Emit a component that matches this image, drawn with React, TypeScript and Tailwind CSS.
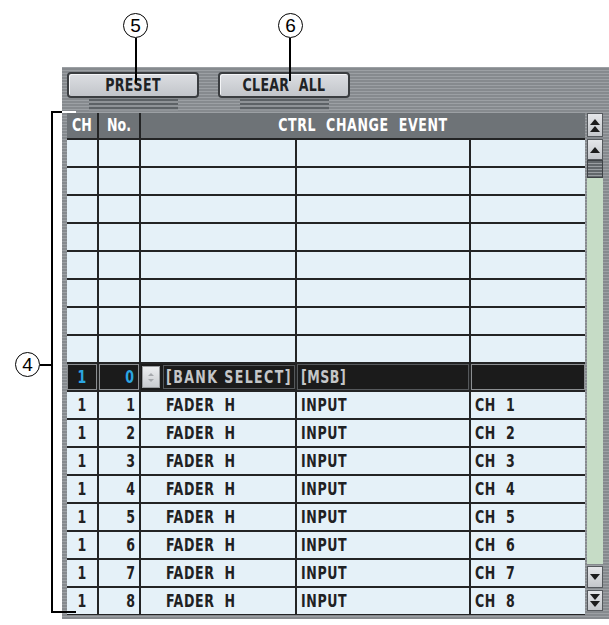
import React from 'react';

const lcd = { fontFamily: '"DejaVu Sans Condensed", "DejaVu Sans", sans-serif' };

const stripes =
  'bg-[repeating-linear-gradient(to_bottom,#9ca0a4_0px,#9ca0a4_1px,#868a8e_1px,#868a8e_3px)]';

const rows = [1, 2, 3, 4, 5, 6, 7, 8];

// tall, narrow LCD-style lettering
function T({ children }: { children: React.ReactNode }) {
  return <span className="inline-block scale-y-[1.3] whitespace-pre">{children}</span>;
}

function Circled({ n }: { n: string }) {
  return (
    <div
      className="w-[25px] h-[25px] rounded-full border border-black bg-white flex items-center justify-center text-[19px] leading-none text-black"
      style={{ fontFamily: '"Liberation Sans", Arial, sans-serif' }}
    >
      {n}
    </div>
  );
}

function PanelButton({ label }: { label: string }) {
  return (
    <div className="flex flex-col items-center">
      <div
        className="w-[132px] h-[26px] rounded-[4px] border-2 border-[#3a3d40] bg-[linear-gradient(to_bottom,#dcdee2,#c2c5ca)] shadow-[inset_1px_1px_0_#f4f5f7] flex items-center justify-center text-[14px] font-bold text-[#202225] tracking-[0.3px]"
        style={lcd}
      >
        <T>{label}</T>
      </div>
      <div className="w-[89px] h-[12px] mt-[1px] bg-[repeating-linear-gradient(to_bottom,#5d6266_0px,#5d6266_2px,#8f9397_2px,#8f9397_4px)]" />
    </div>
  );
}

function Tri({ up }: { up: boolean }) {
  return (
    <svg width="10" height="6" viewBox="0 0 10 6">
      <polygon points={up ? '5,0 10,6 0,6' : '0,0 10,0 5,6'} fill="#1c1c1c" />
    </svg>
  );
}

function ScrollBtn({ double, up, h }: { double?: boolean; up: boolean; h: string }) {
  return (
    <div className={`${h} w-[16px] border border-[#55595d] bg-[linear-gradient(to_bottom,#e4e6e9,#c4c7cb)] flex flex-col items-center justify-center gap-[1px]`}>
      <Tri up={up} />
      {double && <Tri up={up} />}
    </div>
  );
}

export default function App() {
  return (
    <div className="relative w-[609px] h-[625px] bg-white overflow-hidden">
      <div className="pl-[62px] pt-[67px]">
        <div className={`w-[547px] h-[552px] ${stripes}`}>
          {/* button bar */}
          <div className="flex pl-[5px] pt-[5px] h-[46px] gap-[19px]">
            <PanelButton label="PRESET" />
            <PanelButton label="CLEAR  ALL" />
          </div>

          <div className="flex pl-[5px] gap-[2px]">
            {/* table */}
            <div className="w-[518px] bg-[#232425] flex flex-col gap-[2px] pb-[1px]" style={lcd}>
              <div className="flex gap-[2px] h-[25px] text-white font-bold text-[14px]">
                <div className="w-[30px] bg-[#6e7377] flex items-center justify-center"><T>CH</T></div>
                <div className="w-[40px] bg-[#6e7377] flex items-center justify-center"><T>No.</T></div>
                <div className="flex-1 bg-[#6e7377] flex items-center justify-center tracking-[0.6px]">
                  <T>{'CTRL  CHANGE  EVENT'}</T>
                </div>
              </div>

              {Array.from({ length: 8 }).map((_, i) => (
                <div key={'e' + i} className="flex gap-[2px] h-[26px]">
                  <div className="w-[30px] bg-[#e5f1f8]" />
                  <div className="w-[40px] bg-[#e5f1f8]" />
                  <div className="w-[154px] bg-[#e5f1f8]" />
                  <div className="w-[172px] bg-[#e5f1f8]" />
                  <div className="w-[114px] bg-[#e5f1f8]" />
                </div>
              ))}

              {/* selected row */}
              <div className="flex gap-[2px] h-[26px] text-[14px] font-bold">
                <div className="w-[30px] bg-[#1b1b1b] border border-[#8c8f92] flex items-center justify-center text-[#2ba6e2]"><T>1</T></div>
                <div className="w-[40px] bg-[#1b1b1b] border border-[#8c8f92] flex items-center justify-end pr-[4px] text-[#2ba6e2]"><T>0</T></div>
                <div className="w-[154px] bg-[#1b1b1b] flex items-center gap-[3px] pl-[1px]">
                  <div className="w-[18px] h-[22px] bg-[linear-gradient(to_bottom,#eceef0,#c9ccd0)] border border-[#9a9da0] flex flex-col items-center justify-center">
                    <svg width="6" height="9" viewBox="0 0 6 9">
                      <polygon points="3,0 6,3 0,3" fill="#a6a9ad" />
                      <polygon points="0,6 6,6 3,9" fill="#a6a9ad" />
                    </svg>
                  </div>
                  <div className="flex-1 h-[24px] border border-[#55585b] flex items-center pl-[2px] text-[#c4c6c8] tracking-[1.4px]">
                    <T>[BANK SELECT]</T>
                  </div>
                </div>
                <div className="w-[172px] bg-[#1b1b1b] border border-[#55585b] flex items-center pl-[3px] text-[#c4c6c8] tracking-[0.5px]">
                  <T>[MSB]</T>
                </div>
                <div className="w-[114px] bg-[#1b1b1b] border border-[#8c8f92]" />
              </div>

              {rows.map((n) => (
                <div key={n} className="flex gap-[2px] h-[26px] text-[14px] font-bold text-[#1f2123]">
                  <div className="w-[30px] bg-[#e5f1f8] flex items-center justify-center"><T>1</T></div>
                  <div className="w-[40px] bg-[#e5f1f8] flex items-center justify-end pr-[4px]"><T>{n}</T></div>
                  <div className="w-[154px] bg-[#e5f1f8] flex items-center pl-[25px] tracking-[0.6px]"><T>{'FADER  H'}</T></div>
                  <div className="w-[172px] bg-[#e5f1f8] flex items-center pl-[4px] tracking-[0.6px]"><T>INPUT</T></div>
                  <div className="w-[114px] bg-[#e5f1f8] flex items-center pl-[4px] tracking-[0.6px]"><T>{'CH  ' + n}</T></div>
                </div>
              ))}
            </div>

            {/* scrollbar */}
            <div className="flex flex-col gap-[2px] w-[16px]">
              <ScrollBtn double up h="h-[24px]" />
              <ScrollBtn up h="h-[21px]" />
              <div className="h-[18px] -mt-[2px] border border-[#3e4246] bg-[repeating-linear-gradient(to_bottom,#62676b_0px,#62676b_2px,#9a9ea2_2px,#9a9ea2_3px)]" />
              <div className="h-[386px] -mt-[2px] bg-[#c6dcc6]" />
              <ScrollBtn up={false} h="h-[22px]" />
              <ScrollBtn double up={false} h="h-[21px]" />
            </div>
          </div>
        </div>
      </div>

      {/* callouts */}
      <div className="absolute left-[123px] top-[13px]">
        <Circled n="5" />
      </div>
      <div className="absolute left-[135px] top-[38px] w-[2px] h-[45px] bg-black" />
      <div className="absolute left-[278px] top-[13px]">
        <Circled n="6" />
      </div>
      <div className="absolute left-[289px] top-[38px] w-[2px] h-[43px] bg-black" />

      <div className="absolute left-[15px] top-[352px]">
        <Circled n="4" />
      </div>
      <div className="absolute left-[40px] top-[364px] w-[12px] h-[2px] bg-black" />
      <div className="absolute left-[51px] top-[111px] w-[2px] h-[502px] bg-black" />
      <div className="absolute left-[51px] top-[111px] w-[11px] h-[2px] bg-black" />
      <div className="absolute left-[62px] top-[111px] w-[14px] h-[2px] bg-white" />
      <div className="absolute left-[51px] top-[611px] w-[25px] h-[2px] bg-black" />
    </div>
  );
}
